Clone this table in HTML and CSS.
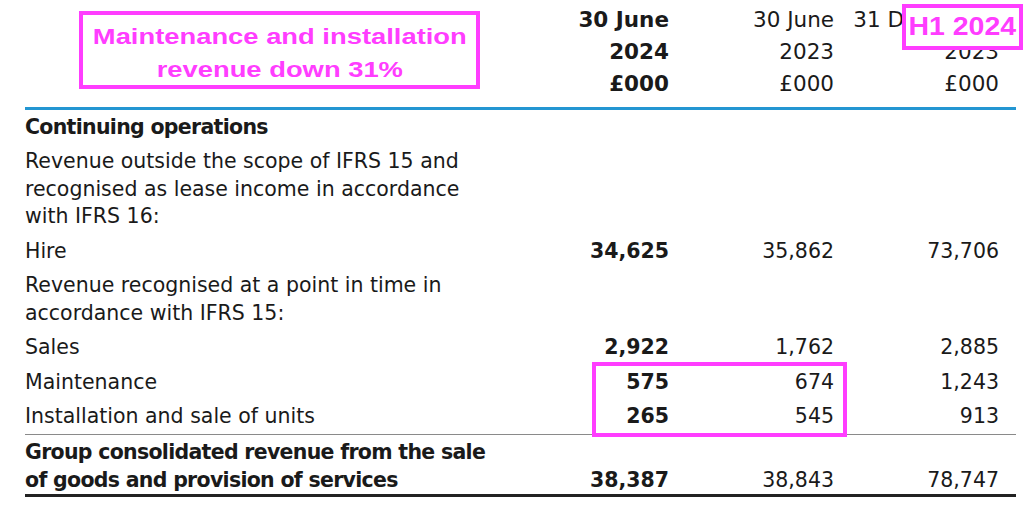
FILE: index.html
```html
<!DOCTYPE html>
<html lang="en">
<head>
<meta charset="utf-8">
<title>Revenue</title>
<link rel="stylesheet" href="styles.css">
</head>
<body>
<div class="page">
  <table class="fin">
    <colgroup>
      <col class="c-label"><col class="c-num"><col class="c-num"><col class="c-num">
    </colgroup>
    <thead>
      <tr>
        <th class="label"></th>
        <th class="num cur">30 June<br>2024<br>£000</th>
        <th class="num">30 June<br>2023<br>£000</th>
        <th class="num">31 December<br>2023<br>£000</th>
      </tr>
    </thead>
    <tbody>
      <tr><td class="label strong">Continuing operations</td><td></td><td></td><td></td></tr>
      <tr><td class="label">Revenue outside the scope of IFRS 15 and<br>recognised as lease income in accordance<br>with IFRS 16:</td><td></td><td></td><td></td></tr>
      <tr><td class="label">Hire</td><td class="num cur">34,625</td><td class="num">35,862</td><td class="num">73,706</td></tr>
      <tr><td class="label">Revenue recognised at a point in time in<br>accordance with IFRS 15:</td><td></td><td></td><td></td></tr>
      <tr><td class="label">Sales</td><td class="num cur">2,922</td><td class="num">1,762</td><td class="num">2,885</td></tr>
      <tr><td class="label">Maintenance</td><td class="num cur">575</td><td class="num">674</td><td class="num">1,243</td></tr>
      <tr class="sub"><td class="label">Installation and sale of units</td><td class="num cur">265</td><td class="num">545</td><td class="num">913</td></tr>
      <tr class="total"><td class="label strong">Group consolidated revenue from the sale<br>of goods and provision of services</td><td class="num cur">38,387</td><td class="num">38,843</td><td class="num">78,747</td></tr>
    </tbody>
  </table>

  <div class="note note-main"><span>Maintenance and installation<br>revenue down 31%</span></div>
  <div class="note note-h1"><span>H1 2024</span></div>
  <div class="note note-box"></div>
</div>
</body>
</html>
```

FILE: styles.css
```css
html, body {
  margin: 0;
  padding: 0;
  background: #ffffff;
}

.page {
  position: relative;
  width: 1030px;
  height: 520px;
  padding: 4px 0 0 25px;
  box-sizing: border-box;
  font-family: "DejaVu Sans", "Liberation Sans", sans-serif;
  color: #1a1a1a;
}

.fin {
  border-collapse: separate;
  border-spacing: 0;
  table-layout: fixed;
  width: 991px;
}

.c-label { width: 496px; }
.c-num { width: 165px; }

.fin th {
  font-weight: normal;
  font-size: 21.5px;
  line-height: 32px;
  padding: 0 17px 7px 0;
  border-bottom: 3px solid #2396d2;
  vertical-align: bottom;
}

.fin th.label { padding: 0; }

.fin td {
  font-size: 20.5px;
  line-height: 27.5px;
  padding: 3.5px 0;
  vertical-align: bottom;
}

.num {
  text-align: right;
  padding-right: 17px !important;
}

.cur { font-weight: bold; }

.fin th.cur { font-weight: bold; }

.label {
  text-align: left;
  white-space: nowrap;
}

.strong {
  font-weight: bold;
  letter-spacing: -0.7px;
}

.sub td {
  border-bottom: 1px solid #8a8a8a;
}

.total td {
  padding-bottom: 0;
  padding-top: 4px;
  border-bottom: 3px solid #222222;
}

.note {
  position: absolute;
  box-sizing: border-box;
  border: 4px solid #ff3dff;
  background: #ffffff;
  color: #ff3dff;
  font-family: "Liberation Sans", Arial, sans-serif;
  font-weight: bold;
  display: flex;
  align-items: center;
  justify-content: center;
  text-align: center;
}

.note span {
  display: inline-block;
  transform: scaleX(1.2);
}

.note-main {
  left: 79px;
  top: 11px;
  width: 401px;
  height: 78px;
  padding-top: 5px;
  font-size: 22.8px;
  line-height: 33px;
}

.note-h1 {
  left: 902px;
  top: 4px;
  width: 121px;
  height: 46px;
  padding-bottom: 2px;
  font-size: 25px;
  line-height: 30px;
}

.note-h1 span { transform: scaleX(1.14); }

.note-box {
  left: 592px;
  top: 362px;
  width: 255px;
  height: 75px;
  background: transparent;
}
```
